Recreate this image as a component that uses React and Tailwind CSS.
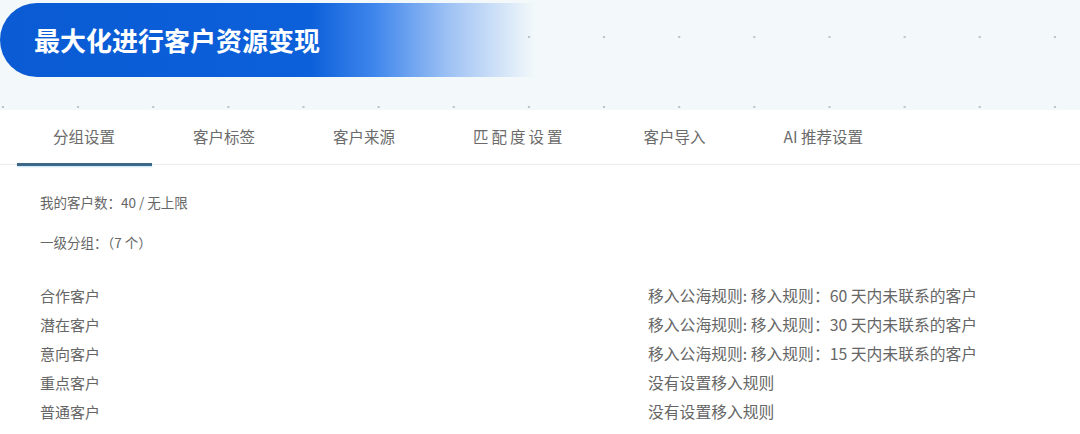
const tabs = ['分组设置', '客户标签', '客户来源', '匹配度设置', '客户导入', 'AI 推荐设置']

const groups = [
  { name: '合作客户', rule: '移入公海规则: 移入规则：60 天内未联系的客户' },
  { name: '潜在客户', rule: '移入公海规则: 移入规则：30 天内未联系的客户' },
  { name: '意向客户', rule: '移入公海规则: 移入规则：15 天内未联系的客户' },
  { name: '重点客户', rule: '没有设置移入规则' },
  { name: '普通客户', rule: '没有设置移入规则' },
]

export default function App() {
  return (
    <div className="w-[1080px] h-[434px] overflow-hidden bg-white font-['Noto_Sans_CJK_SC','Noto_Sans',sans-serif]">
      {/* 顶部横幅 */}
      <div className="h-[110px] pt-[3px] bg-[#f3f9fa] bg-[radial-gradient(circle,#bcc3ca_1px,transparent_1.6px)] bg-[length:75.15px_70px] bg-[position:40.5px_2px]">
        <div className="w-[535px] h-[74px] rounded-l-full flex items-center pl-[34px] bg-[linear-gradient(90deg,#0a5bd4_0%,#0c60da_58%,#3f86ec_70%,#9fc2f4_84%,rgba(243,249,250,0)_100%)]">
          <h1 className="text-[26px] leading-none font-bold text-white -mt-[1px]">最大化进行客户资源变现</h1>
        </div>
      </div>

      {/* 标签栏 */}
      <div className="h-[55px] flex items-stretch pl-[14px] border-b border-[#ececec]">
        {tabs.map((t, i) => (
          <div key={t} className="relative flex items-center px-[39px] text-[15.5px] text-[#6b6b6b]">
            <span className={i === 3 ? 'tracking-[3px]' : ''}>{t}</span>
            {i === 0 && (
              <div className="absolute left-[3px] right-[2px] -bottom-[2px] h-[3px] bg-[#3f6888] shadow-[0_1px_2px_#bfe4f5]" />
            )}
          </div>
        ))}
      </div>

      {/* 内容 */}
      <div className="pl-[40px] text-[#666]">
        <div className="mt-[27px] text-[13.5px] leading-[20px]">我的客户数：40 / 无上限</div>
        <div className="mt-[20px] text-[13.5px] leading-[20px]">一级分组：（7 个）</div>
        <div className="mt-[29px] grid grid-cols-[608px_1fr]">
          {groups.map((g) => (
            <div key={g.name} className="contents">
              <div className="h-[29px] leading-[29px] text-[15px]">{g.name}</div>
              <div className="h-[29px] leading-[29px] text-[15.8px]">{g.rule}</div>
            </div>
          ))}
        </div>
      </div>
    </div>
  )
}
